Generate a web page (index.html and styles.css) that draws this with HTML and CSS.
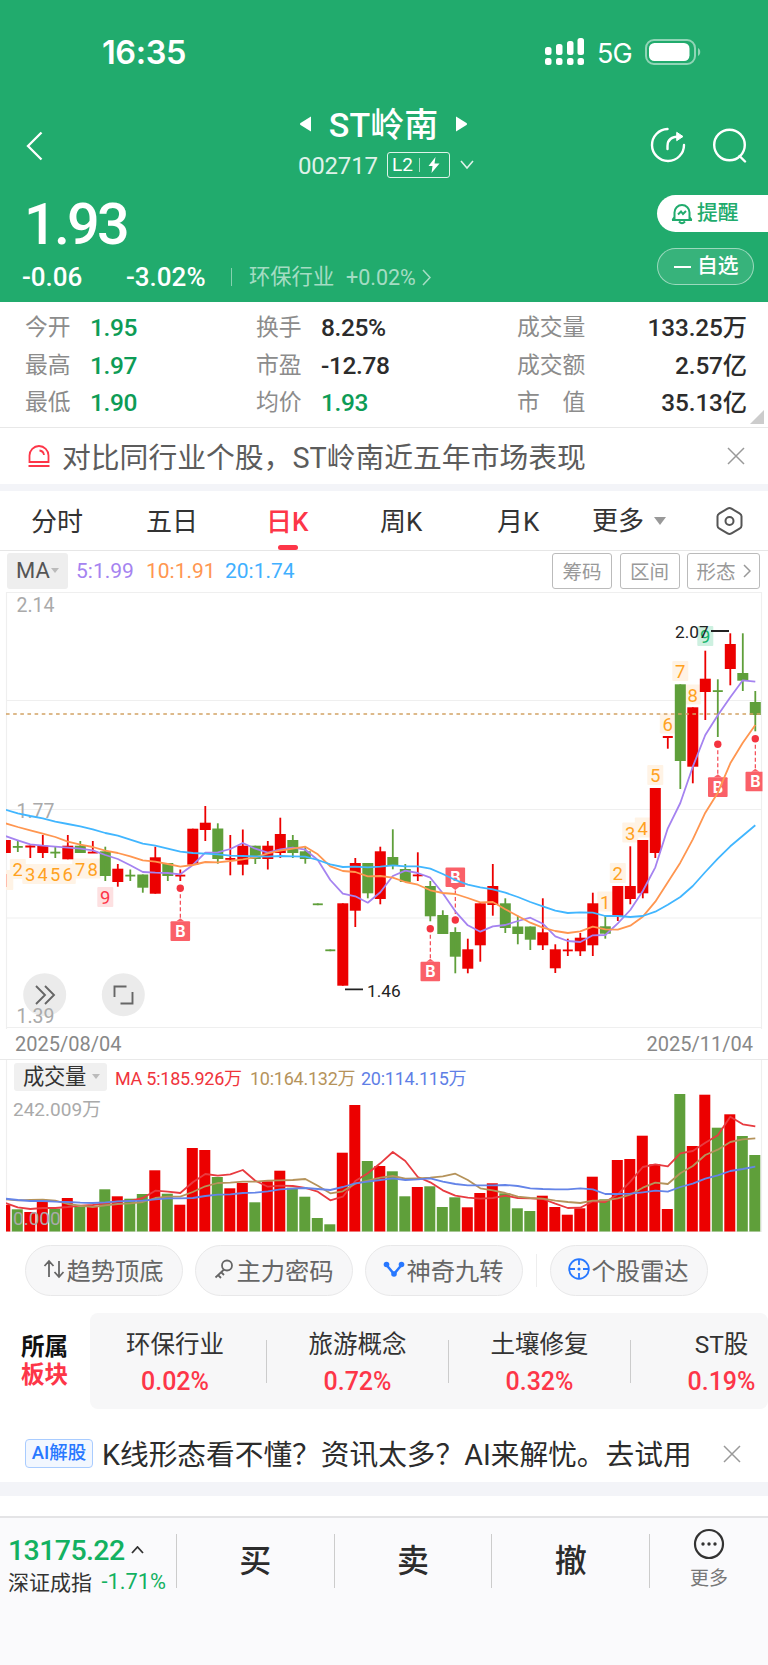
FILE: index.html
```
<!DOCTYPE html>
<html lang="zh-CN">
<head>
    <meta charset="UTF-8">
    <meta name="viewport" content="width=device-width, initial-scale=1.0">
    <title>ST岭南 002717</title>
    <link rel="stylesheet" href="styles.css">
</head>
<body>
    <header class="header">
        <div class="status">
            <span class="time">16:35</span>
            <svg class="signal" width="40" height="28" viewBox="0 0 40 28" fill="#fff">
                <rect x="0" y="9" width="6.5" height="8" rx="2.5"/><rect x="11" y="6" width="6.5" height="11" rx="2.5"/><rect x="22" y="3" width="6.5" height="14" rx="2.5"/><rect x="32.5" y="0" width="6.5" height="17" rx="2.5"/>
                <rect x="0" y="20" width="6.5" height="7" rx="2.5"/><rect x="11" y="20" width="6.5" height="7" rx="2.5"/><rect x="22" y="20" width="6.5" height="7" rx="2.5"/><rect x="32.5" y="20" width="6.5" height="7" rx="2.5"/>
            </svg>
            <span class="net">5G</span>
            <svg class="battery" width="56" height="27" viewBox="0 0 56 27">
                <rect x="1" y="1" width="49" height="24" rx="8" fill="none" stroke="#fff" stroke-opacity=".5" stroke-width="2"/>
                <rect x="4" y="4" width="40.5" height="18" rx="5.5" fill="#fff"/>
                <path d="M53 9c3 1.5 3 6.5 0 8z" fill="#fff" fill-opacity=".5"/>
            </svg>
        </div>

        <div class="nav">
            <svg class="back" width="20" height="30" viewBox="0 0 20 30" fill="none" stroke="#fff" stroke-width="2.3"><path d="M16.5 1.5L3 15l13.5 13.5"/></svg>
            <div class="title">
                <div class="name-row">
                    <svg width="12" height="16" viewBox="0 0 12 16" fill="#fff"><path d="M11 .5v15L.5 9q-1-1 0-2z"/></svg>
                    <h1>ST岭南</h1>
                    <svg width="12" height="16" viewBox="0 0 12 16" fill="#fff"><path d="M1 .5v15L11.5 9q1-1 0-2z"/></svg>
                </div>
                <div class="code-row">
                    <span class="code">002717</span>
                    <span class="level">L2<i></i>
                        <svg width="12" height="16" viewBox="0 0 12 16" fill="#fff"><path d="M7.5 0L.5 9h4L3.5 16l8-9.5h-5z"/></svg>
                    </span>
                    <svg class="down" width="14" height="10" viewBox="0 0 14 10" fill="none" stroke="#fff" stroke-opacity=".85" stroke-width="1.6"><path d="M1 1l6 7 6-7"/></svg>
                </div>
            </div>
            <svg class="share" width="36" height="36" viewBox="0 0 36 36" fill="none" stroke="#fff" stroke-width="2.4" stroke-linecap="round">
                <path d="M17.5 2A16 16 0 1 0 34 18"/><path d="M17.5 22v-3c0-6 4-9.500 12-9.500"/><path d="M27 5.5l6 4-6 4z" fill="#fff" stroke-width="1"/>
            </svg>
            <svg class="search" width="36" height="36" viewBox="0 0 36 36" fill="none" stroke="#fff" stroke-width="2.4" stroke-linecap="round">
                <circle cx="17.5" cy="18" r="15.3"/><path d="M27.5 29l5.5 5.5"/>
            </svg>
        </div>

        <div class="quote">
            <div>
                <div class="price">1.93</div>
                <div class="change">
                    <b class="diff">-0.06</b>
                    <b class="rate">-3.02%</b>
                    <span class="industry">环保行业</span>
                    <span class="industry-rate">+0.02%</span>
                    <svg width="9" height="17" viewBox="0 0 9 17" fill="none" stroke="#fff" stroke-opacity=".6" stroke-width="1.6"><path d="M1 1l7 7.5L1 16"/></svg>
                </div>
            </div>
            <div class="actions">
                <div class="remind">
                    <svg width="22" height="22" viewBox="0 0 22 22" fill="none" stroke="#21ab6d" stroke-width="2"><path d="M3.5 16V9.500a7.500 7.500 0 0 1 15 0V16M1 17h20M3.500 14L1.500 17M18.500 14l2 3M8 18.500q3 3.500 6 0M7 11.500l3-3 2 2.500 3-3"/></svg>
                    <span>提醒</span>
                </div>
                <div class="favor"><i></i><span>自选</span></div>
            </div>
        </div>
    </header>

    <section class="stats">
        <dl>
            <div><dt>今开</dt><dd class="green">1.95</dd></div>
            <div><dt>最高</dt><dd class="green">1.97</dd></div>
            <div><dt>最低</dt><dd class="green">1.90</dd></div>
        </dl>
        <dl>
            <div><dt>换手</dt><dd>8.25%</dd></div>
            <div><dt>市盈</dt><dd>-12.78</dd></div>
            <div><dt>均价</dt><dd class="green">1.93</dd></div>
        </dl>
        <dl class="last">
            <div><dt>成交量</dt><dd>133.25万</dd></div>
            <div><dt>成交额</dt><dd>2.57亿</dd></div>
            <div><dt>市　值</dt><dd>35.13亿</dd></div>
        </dl>
    </section>

    <section class="notice">
        <svg width="24" height="24" viewBox="0 0 24 24" fill="none" stroke="#fd3648" stroke-width="1.8"><path d="M2.5 18V11.500a9.500 9.500 0 0 1 19 0V18zM1.500 22h21M12.500 6.500q4 .5 4.500 4.500"/></svg>
        <p>对比同行业个股，ST岭南近五年市场表现</p>
        <svg class="close" width="18" height="18" viewBox="0 0 18 18" fill="none" stroke="#999" stroke-width="1.5"><path d="M1 1l16 16M17 1L1 17"/></svg>
    </section>

    <nav class="tabs">
        <span>分时</span>
        <span>五日</span>
        <span class="active">日K</span>
        <span>周K</span>
        <span>月K</span>
        <span class="more">更多<i class="caret"></i></span>
        <svg width="27" height="28" viewBox="0 0 27 28" fill="none" stroke="#555" stroke-width="2"><path d="M11.5 1.7q2-1.2 4 0l8 4.600q2 1.200 2 3v9.400q0 1.800-2 3l-8 4.600q-2 1.200-4 0l-8-4.600q-2-1.200-2-3V9.300q0-1.800 2-3z"/><circle cx="13.5" cy="14" r="4"/></svg>
    </nav>

    <section class="ma">
        <span class="select">MA<i class="caret"></i></span>
        <span class="ma5">5:1.99</span>
        <span class="ma10">10:1.91</span>
        <span class="ma20">20:1.74</span>
        <div class="tools">
            <span>筹码</span>
            <span>区间</span>
            <span class="wide">形态<svg width="8" height="14" viewBox="0 0 8 14" fill="none" stroke="#999" stroke-width="1.5"><path d="M1 1l6 6-6 6"/></svg></span>
        </div>
    </section>

    <svg id="kline" class="kline" width="768" height="437" viewBox="0 592 768 437"></svg>

    <div class="dates"><span>2025/08/04</span><span>2025/11/04</span></div>

    <section class="vol-head">
        <span class="select">成交量<i class="caret"></i></span>
        <span class="v5">MA 5:185.926万</span>
        <span class="v10">10:164.132万</span>
        <span class="v20">20:114.115万</span>
    </section>
    <svg id="volume" class="volume" width="768" height="140" viewBox="0 1093 768 140"></svg>

    <section class="chips">
        <span>
            <svg width="22" height="22" viewBox="0 0 22 22" fill="none" stroke="#666" stroke-width="1.8"><path d="M6 19V3M1.5 8L6 3l4.500 5M16 3v16M11.500 14l4.500 5 4.500-5"/></svg>趋势顶底
        </span>
        <span>
            <svg width="22" height="22" viewBox="0 0 22 22" fill="none" stroke="#666" stroke-width="1.8"><circle cx="14" cy="7.5" r="5"/><path d="M11 11.5L2.500 19.500M5 17l3 3M8 14l3 3"/></svg>主力密码
        </span>
        <span>
            <svg width="22" height="22" viewBox="0 0 22 22"><path d="M3.5 7l7.500 9 7.500-9" fill="none" stroke="#2878ff" stroke-width="2.5"/><g fill="#2878ff"><circle cx="3.5" cy="6.5" r="2.8"/><circle cx="18.5" cy="6.5" r="2.8"/><circle cx="11" cy="16" r="2.8"/></g></svg>神奇九转
        </span>
        <i></i>
        <span>
            <svg width="22" height="22" viewBox="0 0 22 22" fill="none" stroke="#2878ff" stroke-width="1.8"><circle cx="11" cy="11" r="9.8"/><path d="M11 1v6M11 15v6M1 11h6M15 11h6"/><circle cx="11" cy="11" r="1.6" fill="#2878ff" stroke="none"/></svg>个股雷达
        </span>
    </section>

    <section class="sector">
        <h3>所属<em>板块</em></h3>
        <ul>
            <li>环保行业<b>0.02%</b></li>
            <li>旅游概念<b>0.72%</b></li>
            <li>土壤修复<b>0.32%</b></li>
            <li>ST股<b>0.19%</b></li>
        </ul>
    </section>

    <section class="ai">
        <span class="badge">AI解股</span>
        <p>K线形态看不懂？资讯太多？AI来解忧。去试用</p>
        <svg class="close" width="18" height="18" viewBox="0 0 18 18" fill="none" stroke="#999" stroke-width="1.5"><path d="M1 1l16 16M17 1L1 17"/></svg>
    </section>

    <footer class="footer">
        <div class="index">
            <div class="point">13175.22<svg width="13" height="8" viewBox="0 0 13 8" fill="none" stroke="#333" stroke-width="1.8"><path d="M1 7l5.500-6L12 7"/></svg></div>
            <div class="index-name">深证成指<span>-1.71%</span></div>
        </div>
        <div class="trade">买</div>
        <div class="trade">卖</div>
        <div class="trade">撤</div>
        <div class="menu">
            <svg width="32" height="32" viewBox="0 0 32 32" fill="none" stroke="#333" stroke-width="2.2"><circle cx="16" cy="16" r="14"/><g fill="#333" stroke="none"><circle cx="10" cy="16" r="1.7"/><circle cx="16" cy="16" r="1.7"/><circle cx="22" cy="16" r="1.7"/></g></svg>
            更多
        </div>
    </footer>

    <script src="chart.js"></script>
</body>
</html>
```
FILE: styles.css
```
* {
    box-sizing: border-box;
    margin: 0;
    padding: 0;
}

body {
    width: 768px;
    height: 1665px;
    overflow: hidden;
    background: #fff;
    color: #333;
    font-family: Roboto, "Noto Sans CJK SC", sans-serif;
}

svg {
    display: block;
    flex: none;
}

i, em {
    font-style: normal;
}

/* header */
.header {
    height: 302px;
    background: #21ab6d;
    color: #fff;
}

.status {
    display: flex;
    height: 100px;
    padding: 33px 0 0 102px;
}

.time {
    width: 443px;
    font: 600 32.5px/40px Inter, sans-serif;
    letter-spacing: -0.4px;
}

.signal {
    margin-top: 5px;
}

.net {
    width: 47px;
    margin-left: 12px;
    padding-top: 1px;
    font: 400 27px/40px Inter, sans-serif;
    letter-spacing: -0.8px;
}

.battery {
    margin: 6px 0 0 1px;
}

.nav {
    display: flex;
    height: 90px;
    padding-left: 25px;
}

.back {
    margin-top: 31px;
}

.title {
    width: 300px;
    margin-left: 190px;
}

.name-row {
    display: flex;
    align-items: center;
    justify-content: center;
    gap: 17px;
    width: 300px;
    height: 47px;
    padding-right: 3px;
}

.name-row h1 {
    padding-top: 2px;
    font-size: 34px;
    font-weight: 500;
    line-height: 46px;
}

.code-row {
    display: flex;
    align-items: center;
    height: 36px;
    padding-left: 63px;
}

.code {
    width: 89px;
    padding-top: 2px;
    font-size: 24px;
    letter-spacing: -0.2px;
    opacity: .85;
}

.level {
    display: flex;
    align-items: center;
    width: 63px;
    height: 26px;
    padding-left: 4px;
    border: 1.5px solid rgba(255, 255, 255, .85);
    border-radius: 3px;
    font-size: 19px;
    line-height: 24px;
}

.level i {
    width: 1px;
    height: 14px;
    margin: 0 8px 0 6px;
    background: rgba(255, 255, 255, .6);
}

.down {
    margin-left: 10px;
}

.share {
    margin: 27px 0 0 115px;
}

.search {
    margin: 27px 0 0 26px;
}

.quote {
    display: flex;
    justify-content: space-between;
}

.price {
    height: 68px;
    padding: 1px 0 0 24px;
    font-size: 57.5px;
    font-weight: 500;
    line-height: 68px;
    letter-spacing: -2.8px;
}

.change {
    display: flex;
    align-items: center;
    height: 37px;
    padding: 1px 0 0 22px;
    font-size: 26px;
}

.change b {
    font-weight: 500;
}

.diff {
    width: 104px;
}

.rate {
    width: 105px;
}

.industry {
    width: 115px;
    padding-left: 18px;
    background: linear-gradient(rgba(255, 255, 255, .45), rgba(255, 255, 255, .45)) left center / 1px 18px no-repeat;
    color: rgba(255, 255, 255, .6);
    font-size: 21.3px;
    line-height: 30px;
}

.industry-rate {
    width: 76px;
    color: rgba(255, 255, 255, .6);
    font-size: 21.5px;
}

.actions {
    width: 111px;
    padding-top: 5px;
    font-size: 20.8px;
    font-weight: 500;
}

.actions span {
    line-height: 32px;
    padding-bottom: 2px;
}

.remind, .favor {
    display: flex;
    align-items: center;
    height: 37px;
}

.remind {
    gap: 4px;
    padding-left: 14px;
    border-radius: 19px 0 0 19px;
    background: #fff;
    color: #21ab6d;
}

.favor {
    width: 97px;
    margin-top: 16px;
    padding-left: 16px;
    border: 1px solid rgba(255, 255, 255, .5);
    border-radius: 19px;
    background: rgba(255, 255, 255, .1);
}

.favor i {
    width: 17px;
    height: 2px;
    margin-right: 6px;
    background: #fff;
}

/* stats */
.stats {
    position: relative;
    display: grid;
    grid-template-columns: 231px 261px 230px;
    height: 126px;
    padding: 7px 0 0 25px;
    border-bottom: 1px solid #e8e8e8;
}

.stats::after {
    content: "";
    position: absolute;
    right: 4px;
    bottom: 3px;
    border: 7px solid #ccc;
    border-top-color: transparent;
    border-left-color: transparent;
}

.stats dl > div {
    display: flex;
    align-items: center;
    height: 37.5px;
}

.stats dt {
    width: 65px;
    color: #8c8c8c;
    font-size: 22.8px;
    line-height: 37px;
}

.stats dd {
    color: #2c2c2c;
    font-size: 24.5px;
    font-weight: 500;
    line-height: 37px;
    letter-spacing: -0.4px;
}

.stats .last dt {
    width: 90px;
}

.stats .last dd {
    flex: 1;
    text-align: right;
    font-size: 24.3px;
    letter-spacing: -0.1px;
}

.stats dd.green {
    color: #0d9c56;
}

/* notice */
.notice {
    display: flex;
    align-items: center;
    height: 56px;
    padding-left: 27px;
}

.notice p {
    width: 676px;
    padding: 3px 0 0 11px;
    color: #5c5c5c;
    font-size: 28.8px;
    line-height: 40px;
}

/* tabs */
.tabs {
    display: flex;
    align-items: center;
    height: 67px;
    border-top: 7px solid #f3f4f8;
    border-bottom: 1px solid #e6e6e6;
    padding-left: 31px;
    font-size: 26px;
    color: #333;
}

.tabs span {
    width: 115px;
    height: 59px;
    line-height: 62px;
}

.tabs span:nth-child(2) {
    width: 120px;
}

.tabs span:nth-child(3) {
    width: 114px;
}

.tabs span:nth-child(4) {
    width: 117px;
}

.tabs span:nth-child(5) {
    width: 95px;
}

.tabs .active {
    position: relative;
    color: #fd3648;
    font-weight: 500;
}

.tabs .active::after {
    content: "";
    position: absolute;
    left: 12px;
    bottom: 0;
    width: 20px;
    height: 5px;
    border-radius: 2.5px;
    background: #fd3648;
}

.tabs .more {
    display: flex;
    align-items: center;
    width: 124px;
}

.caret {
    border: 6.5px solid transparent;
    border-top: 8px solid #999;
    border-bottom: 0;
    margin-left: 10px;
}

/* moving averages */
.ma {
    display: flex;
    align-items: center;
    height: 41px;
    padding: 0 8px 2px 7px;
    font-size: 21px;
}

.select {
    display: flex;
    align-items: center;
    width: 61px;
    height: 36px;
    padding-left: 9px;
    border-radius: 3px;
    background: #eee;
    color: #555;
    font-size: 22px;
}

.select .caret {
    margin-left: 1px;
    border-width: 5px 4px 0;
    border-top-color: #bbb;
}

.ma5 {
    width: 70px;
    margin-left: 8px;
    color: #a583f0;
}

.ma10 {
    width: 79px;
    color: #ff9650;
}

.ma20 {
    color: #41b0ff;
}

.tools {
    display: flex;
    gap: 7.5px;
    margin-left: auto;
    color: #999;
    font-size: 19.5px;
}

.tools span {
    display: flex;
    align-items: center;
    justify-content: center;
    width: 60px;
    height: 36px;
    border: 1.5px solid #bbb;
    border-radius: 3px;
}

.tools .wide {
    gap: 7px;
    width: 73px;
}

/* charts */
.grid {
    stroke: #efefef;
    stroke-width: 1.2;
    fill: none;
}

.line {
    fill: none;
    stroke-width: 1.8;
    stroke-linejoin: round;
}

.axis {
    fill: #aaa;
    font-size: 19.5px;
}

.axis .small {
    font-size: 19px;
}

.peak {
    fill: #222;
    font-size: 17.3px;
}

.count {
    font-size: 18.5px;
    text-anchor: middle;
}

.signal-text {
    fill: #fff;
    font: bold 15.5px Inter, sans-serif;
    text-anchor: middle;
}

.dates {
    display: flex;
    justify-content: space-between;
    height: 31px;
    padding: 0 15px;
    border-bottom: 1px solid #e9e9e9;
    color: #888;
    font-size: 20px;
    line-height: 31px;
}

.vol-head {
    display: flex;
    align-items: center;
    height: 33px;
    padding: 0 14px;
    font-size: 18px;
    letter-spacing: -0.25px;
    white-space: nowrap;
}

.vol-head .select {
    width: 93px;
    height: 28px;
    margin-right: 8px;
    padding-left: 9px;
    background: #f0f0f0;
    color: #333;
    font-size: 21.3px;
    line-height: 28px;
}

.vol-head .select .caret {
    margin-left: 6px;
}

.v5 {
    width: 135px;
    color: #f0343c;
}

.v10 {
    width: 111px;
    color: #b5935b;
}

.v20 {
    color: #5f7fe6;
}

.volume {
    overflow: visible;
}

/* indicator chips */
.chips {
    display: flex;
    align-items: center;
    height: 50px;
    margin-top: 12px;
    padding-left: 24.5px;
}

.chips span {
    display: flex;
    align-items: center;
    justify-content: center;
    gap: 1px;
    width: 158px;
    height: 51px;
    margin-right: 12px;
    padding-bottom: 2px;
    border: 1px solid #e8e8e9;
    border-radius: 26px;
    background: #f7f7f8;
    color: #666;
    font-size: 24.3px;
    white-space: nowrap;
}

.chips i {
    width: 1px;
    height: 33px;
    margin: 0 13px 0 1px;
    background: #eee;
}

/* sector */
.sector {
    display: flex;
    height: 96px;
    margin-top: 18px;
}

.sector h3 {
    width: 90px;
    padding: 20px 0 0 21px;
    color: #111;
    font-size: 23.6px;
    font-weight: 700;
    line-height: 28px;
}

.sector em {
    display: block;
    color: #fd3648;
}

.sector ul {
    display: flex;
    width: 678px;
    overflow: hidden;
    border-radius: 8px;
    background: #f7f7f8;
    list-style: none;
}

.sector li {
    flex: none;
    width: 182px;
    padding-top: 13px;
    background: linear-gradient(#ccc, #ccc) right 27px / 1px 43px no-repeat;
    color: #333;
    font-size: 24.5px;
    line-height: 37px;
    text-align: center;
}

.sector li:first-child {
    width: 183px;
    margin-left: -6.5px;
}

.sector li b {
    display: block;
    color: #fd3648;
    font-size: 25px;
    font-weight: 500;
}

/* ai */
.ai {
    display: flex;
    align-items: center;
    height: 57px;
    margin-top: 16px;
    padding-left: 25px;
}

.badge {
    width: 68px;
    height: 29px;
    border: 1.5px solid #a9ccff;
    border-radius: 4px;
    background: #f2f7ff;
    color: #2878ff;
    font-size: 18.5px;
    font-weight: 500;
    line-height: 27px;
    text-align: center;
}

.ai p {
    width: 630px;
    padding: 3px 0 0 9px;
    color: #2c2c2c;
    font-size: 28.7px;
    line-height: 40px;
    white-space: nowrap;
}

/* footer */
.footer {
    display: flex;
    height: 183px;
    border-top: 14px solid #f3f4f8;
    padding-top: 20px;
    background: linear-gradient(#fff 20px, #e4e4e6 20px, #e4e4e6 22px, #fafafc 22px);
    background-clip: padding-box;
}

.index {
    width: 176px;
    padding: 16px 0 0 8px;
}

.point {
    display: flex;
    align-items: center;
    gap: 6px;
    height: 36px;
    color: #13b161;
    font-size: 28.5px;
    font-weight: 500;
    letter-spacing: -0.6px;
}

.index-name {
    display: flex;
    align-items: center;
    justify-content: space-between;
    width: 158px;
    height: 26px;
    font-size: 21px;
    white-space: nowrap;
}

.index-name span {
    color: #13b161;
    font-size: 21.8px;
}

.trade, .menu {
    height: 54px;
    margin-top: 18px;
    border-left: 1px solid #ccc;
}

.trade {
    width: 157.7px;
    color: #2c2c2c;
    font-size: 32px;
    font-weight: 500;
    line-height: 55px;
    text-align: center;
}

.menu {
    display: flex;
    flex-direction: column;
    align-items: center;
    width: 119px;
    color: #777;
    font-size: 19px;
    line-height: 38px;
}

.menu svg {
    margin-top: -6px;
}
```
FILE: chart.js
```
const RED = "#ec0000";
const GREEN = "#5f9f3a";
const STEP = 12.5;
const x = i => 5.3 + STEP * i;

// colour, body top, body bottom, high, low, volume top
const bars = [
    ["r", 840, 853, 840, 853, 1205], ["g", 846, 847.3, 840.7, 852, 1209.3], ["r", 845.5, 847.5, 845.5, 858, 1212],
    ["r", 845.7, 853, 835, 858, 1200.7], ["g", 851.7, 853, 847, 858, 1208.7], ["r", 845.7, 859.3, 835, 859.3, 1198],
    ["g", 845.7, 853, 841, 853, 1206.7], ["r", 851.7, 853, 841, 853, 1206.7], ["g", 851.3, 876, 846.7, 881, 1189.3],
    ["r", 868.7, 882, 864, 886.7, 1196.3], ["g", 874.7, 876, 869.5, 881, 1198.7], ["g", 874.5, 887.7, 874.5, 892.7, 1194],
    ["r", 857.3, 893.7, 846.7, 893.7, 1170.3], ["g", 863, 876, 863, 881, 1193.7], ["r", 874.7, 876, 869.5, 881, 1204.7],
    ["r", 828.7, 864.7, 828.7, 864.7, 1148], ["r", 822.7, 830, 806, 841, 1150], ["g", 828.5, 859, 823.3, 863.7, 1177],
    ["r", 858, 859.4, 835, 875.3, 1188.3], ["r", 845.7, 864.7, 829.5, 875.3, 1183], ["g", 845.7, 859, 845.7, 864, 1202.3],
    ["r", 845.7, 859, 841, 869.5, 1181.3], ["r", 834, 853, 817.7, 858, 1170.7], ["g", 840, 853, 835, 858, 1187.7],
    ["g", 851.3, 859, 847, 863.7, 1196.7], ["g", 903.4, 905.2, 903.4, 905.2, 1218], ["g", 949.4, 951.2, 949.4, 951.2, 1224.3],
    ["r", 903.3, 985.7, 903.3, 985.7, 1152.7], ["r", 863, 910.7, 858, 927, 1105], ["g", 863, 893.3, 863, 898.3, 1161],
    ["r", 851.3, 899, 846.7, 904.3, 1166], ["g", 857, 865, 829.3, 869.3, 1171.3], ["g", 869, 882, 864, 882, 1196.3],
    ["r", 874.5, 876, 852.3, 881, 1187], ["g", 886, 916.3, 881, 921.3, 1186.3], ["g", 915, 934, 910.3, 934, 1207],
    ["g", 932, 956.7, 927.3, 973.3, 1197.3], ["r", 949.3, 968.7, 938.7, 973.3, 1207.3], ["r", 903.3, 945.3, 903.3, 961.7, 1193],
    ["r", 886, 905, 864, 915.7, 1183.3], ["g", 903.3, 928, 898.3, 933, 1193.3], ["g", 926.5, 934, 915.7, 944.3, 1208.3],
    ["g", 926.5, 939.7, 926.5, 950, 1211], ["r", 932.3, 945.3, 898.3, 950, 1195.7], ["r", 949.3, 968.3, 944.3, 973, 1207],
    ["r", 949.5, 951.3, 938.7, 956, 1214.7], ["r", 937.7, 951.3, 933, 956, 1208.3], ["r", 903.3, 945.3, 892.7, 956, 1176.7],
    ["g", 926.3, 933.7, 915.3, 938.7, 1199.3], ["r", 886, 916.7, 886, 921, 1160], ["r", 886, 899, 846.3, 904.3, 1159],
    ["r", 840, 893.3, 840, 898.3, 1135.7], ["r", 788, 853, 788, 858, 1164.3], ["r", 736, 738, 736, 748.7, 1209],
    ["g", 684.3, 761, 684.3, 789, 1094], ["r", 707.3, 766.7, 707.3, 783.3, 1146], ["r", 678.7, 692, 650.7, 720, 1094.7],
    ["g", 690.2, 691.8, 679.3, 737, 1127.7], ["r", 644, 669, 633.3, 685.3, 1114.3], ["g", 673, 680.7, 633.3, 691, 1136],
    ["g", 702, 715, 691, 731.3, 1155]
];

const priceLines = {
    "#a583f0": [836, 840.3, 844.3, 845.7, 846.7, 847.7, 848.7, 850.3, 855, 859, 865.3, 872, 872.7, 873, 874.3, 865, 852.7, 852.3, 849, 843, 848.7, 852.7, 849.3, 847.7, 849.7, 860, 880, 893.7, 896.3, 902.7, 892.3, 876, 870.7, 873, 877.7, 893.3, 911.3, 925.3, 931.7, 926.3, 925, 921, 917.7, 923.7, 936.3, 941, 942, 935.3, 935, 923.3, 910, 891, 867.3, 828.3, 803, 766.7, 735, 715.3, 697.3, 680.3, 681.7],
    "#ff9650": [823.3, 827, 830.3, 833.7, 837, 841.7, 844.7, 847, 850.7, 853, 856.3, 860.3, 861.7, 864, 866.7, 865, 862, 862.3, 861, 859.3, 857.3, 853.3, 850.7, 848.7, 846.7, 854.3, 866.3, 871, 872, 876.3, 876, 877.7, 882, 884.7, 890.3, 893, 894, 898, 902.3, 902, 909.3, 916, 922.7, 927.7, 931, 933, 931.3, 926.7, 929.3, 929.7, 925.7, 916.7, 901.7, 882.3, 862.7, 839.3, 812.7, 792.7, 763.3, 742.7, 725],
    "#41b6ff": [809.7, 813.3, 816, 818.3, 821.7, 824, 826.3, 829.3, 833, 835.7, 839.7, 843.7, 845.7, 848.7, 851.7, 853, 853.7, 854.3, 855.7, 856, 856.3, 856.7, 856, 856.3, 856.7, 860, 864.3, 867, 866.7, 867.3, 866.7, 865.3, 866.3, 866.3, 868.7, 874, 880, 884.7, 887.3, 889.3, 892.7, 897, 902, 906.3, 910.7, 913, 912.3, 912.7, 916, 916, 917, 916, 911.7, 904.7, 897, 886, 872, 858.7, 846.3, 835.7, 825.3]
};

const volumeLines = {
    "#e83b40": [1203, 1207.3, 1209, 1208, 1208, 1207, 1205.7, 1205, 1203.3, 1201.3, 1201, 1198, 1190.7, 1191.7, 1193, 1182.3, 1174, 1175.7, 1174.3, 1170, 1180.7, 1186.7, 1185.7, 1186, 1188, 1191.7, 1200.3, 1196.7, 1181, 1173.3, 1163.3, 1152, 1161, 1177, 1182.3, 1190.3, 1195.7, 1197.7, 1198.7, 1198, 1195.7, 1198, 1198.3, 1199, 1203.7, 1208, 1207.7, 1201.3, 1202, 1194.3, 1181.7, 1167, 1164.3, 1166.3, 1153.3, 1151, 1142.7, 1135.3, 1116.7, 1124.3, 1126.3],
    "#b5935b": [1199.3, 1200.3, 1200, 1199.7, 1200.7, 1204, 1205.7, 1207, 1205.3, 1204, 1203.3, 1202, 1198, 1196.7, 1196.7, 1192, 1186.3, 1183, 1182.7, 1181.7, 1181.7, 1180.7, 1180.3, 1180, 1179, 1185.7, 1193.3, 1191.3, 1183.7, 1180.7, 1177.7, 1176, 1178.7, 1178.3, 1177.7, 1176.3, 1173.7, 1180, 1188.3, 1190.3, 1193, 1196.7, 1198, 1198.7, 1200.7, 1202, 1203, 1200.7, 1200.3, 1198.3, 1194.7, 1187.7, 1182.7, 1184, 1173.3, 1166, 1155, 1149.7, 1142, 1139.3, 1138.3],
    "#6484e8": [1198.7, 1200, 1201, 1201, 1201.7, 1202, 1202.7, 1203, 1202.3, 1201.3, 1201, 1200.7, 1199.3, 1198.3, 1198.3, 1198, 1196, 1194.7, 1194.3, 1193, 1192.7, 1191.3, 1189.3, 1188.7, 1188, 1189, 1190, 1187, 1183.3, 1181.7, 1180, 1178.3, 1180, 1179.3, 1178.3, 1181.7, 1184, 1185.3, 1185.3, 1185.3, 1185, 1186, 1188.3, 1189, 1189.3, 1189.3, 1188.3, 1189.3, 1194, 1194, 1193.7, 1192.3, 1190.7, 1191.7, 1187, 1183.7, 1178.7, 1175.3, 1171, 1169, 1166.7]
};

// label, bar index, centre y
const counts = [
    [1, 0, 880], [2, 1, 869], [3, 2, 874], [4, 3, 874], [5, 4, 874], [6, 5, 874], [7, 6, 868.5], [8, 7, 868.5], [9, 8, 897, "red"],
    [1, 48, 901.5], [2, 49, 873], [3, 50, 832.5], [4, 51, 827.5], [5, 52, 775], [6, 53, 723.5], [7, 54, 671], [8, 55, 694.5], [9, 56, 636, "green"]
];
const countColors = { red: ["#fde0e1", "#fd3648"], green: ["#cdf0e0", "#14b36c"], none: ["#fff3e5", "#ffa21f"] };

// bar index, dot y, direction of the badge
const buys = [[14, 888.3, 1], [34, 928.7, 1], [36, 920, -1], [57, 744.3, 1], [60, 738.7, 1]];

function drawLines(lines) {
    return Object.entries(lines).map(([color, ys]) =>
        `<polyline class="line" stroke="${color}" points="${ys.map((y, i) => x(i) + "," + y).join(" ")}"/>`).join("");
}

function drawKline() {
    let out = `<defs><clipPath id="plot"><rect x="6" y="592" width="756.5" height="436"/></clipPath></defs>`;
    [592.5, 700.5, 809.5, 918, 1027.5].forEach(y => {
        out += `<path class="grid" d="M6 ${y}H762"/>`;
    });
    out += `<path class="grid" d="M6.5 592V1029M761.5 592V1029"/>`;
    out += `<g fill="#ebebeb"><circle cx="44.7" cy="994.7" r="21.5"/><circle cx="123.3" cy="994.7" r="21.5"/></g>`;
    out += `<path d="M36 986l9 9-9 9M45 986l9 9-9 9M114.500 997v-10.500h12M132.500 992v11.500h-12" fill="none" stroke="#666" stroke-width="1.9"/>`;
    out += `<g class="axis"><text x="16.5" y="612">2.14</text><text x="16.5" y="817.5">1.77</text><text x="16.5" y="1022.5">1.39</text></g>`;

    out += `<g clip-path="url(#plot)">`;
    counts.forEach(([n, i, y, kind]) => {
        const [bg, fg] = countColors[kind || "none"];
        out += `<rect x="${x(i) - 8}" y="${y - 10}" width="16" height="20" rx="1" fill="${bg}"/>`;
        out += `<text class="count" x="${x(i)}" y="${y + 7}" fill="${fg}">${n}</text>`;
    });
    bars.forEach(([c, top, bottom, high, low], i) => {
        const color = c === "r" ? RED : GREEN;
        const w = bottom - top < 2.1 ? 10 : 11;
        out += `<rect x="${x(i) - w / 2}" y="${top}" width="${w}" height="${Math.max(bottom - top, 1.8)}" fill="${color}"/>`;
        out += `<rect x="${x(i) - 0.9}" y="${high}" width="1.8" height="${low - high}" fill="${color}"/>`;
    });
    out += `<path d="M6 714H762" stroke="#d2a264" stroke-width="1.5" stroke-dasharray="3.6 3.55"/>`;
    buys.forEach(([i, y, dir]) => {
        const cx = x(i);
        const top = dir > 0 ? y + 33 : y - 52.5;
        const tip = dir > 0 ? top : top + 19.5;
        out += `<circle cx="${cx}" cy="${y}" r="3.7" fill="#f4333f"/>`;
        out += `<path d="M${cx} ${y + 6 * dir}V${y + 30 * dir}" stroke="#f4333f" stroke-width="1.1" stroke-dasharray="4 2.5"/>`;
        out += `<rect x="${cx - 9.8}" y="${top}" width="19.6" height="19.6" rx="1" fill="#fa6068"/>`;
        out += `<path d="M${cx - 4} ${tip}L${cx} ${tip - 3 * dir}L${cx + 4} ${tip}z" fill="#fa6068"/>`;
        out += `<text class="signal-text" x="${cx}" y="${top + 15.6}">B</text>`;
    });
    out += drawLines(priceLines) + `</g>`;
    out += `<g class="peak"><text x="675" y="637.5">2.07</text><text x="367" y="996.5">1.46</text></g>`;
    out += `<path d="M711 631h18M345 989.3h18" stroke="#222" stroke-width="1.8"/>`;
    document.getElementById("kline").innerHTML = out;
}

function drawVolume() {
    let out = `<defs><clipPath id="vplot"><rect x="6" y="1060" width="756" height="173"/></clipPath></defs>`;
    out += `<path class="grid" d="M6.5 1060V1232M761.5 1060V1232M6 1231.5H762"/><g clip-path="url(#vplot)">`;
    bars.forEach((b, i) => {
        out += `<rect x="${x(i) - 6}" y="${b[5]}" width="11" height="${1231.5 - b[5]}" fill="${b[0] === "r" ? RED : GREEN}"/>`;
    });
    out += drawLines(volumeLines) + `</g>`;
    out += `<g class="axis"><text class="small" x="13" y="1115.5">242.009万</text><text class="small" x="13" y="1225">0.000</text></g>`;
    document.getElementById("volume").innerHTML = out;
}

drawKline();
drawVolume();
```
